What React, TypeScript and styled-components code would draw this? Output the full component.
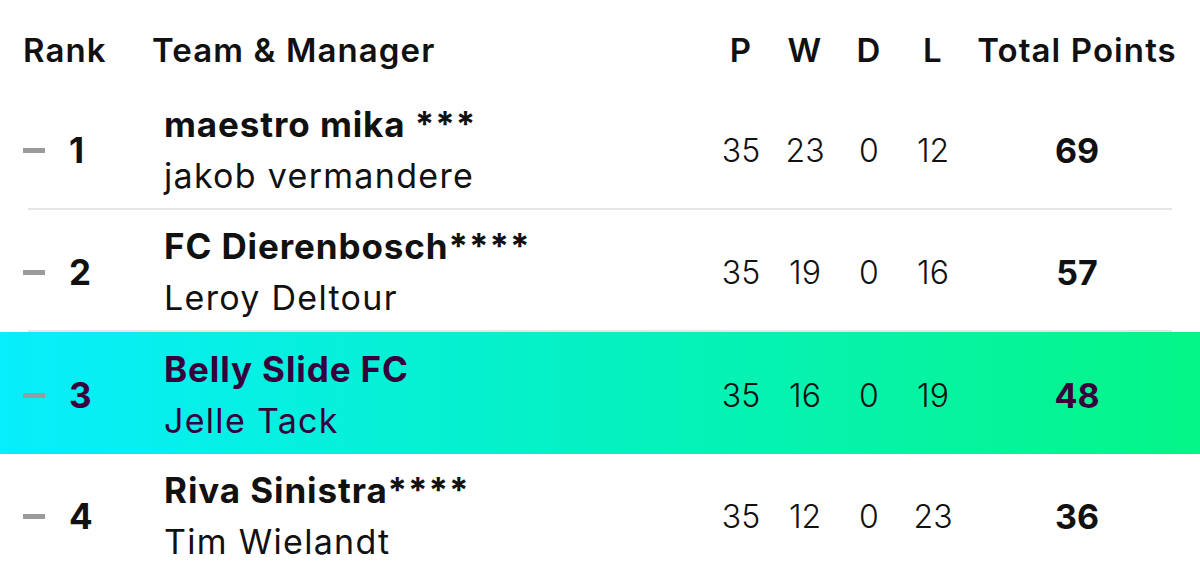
import React from "react";
import styled, { createGlobalStyle } from "styled-components";

const GlobalStyle = createGlobalStyle`
  html, body {
    margin: 0;
    padding: 0;
    background: #ffffff;
  }
  body {
    font-family: Inter, "Noto Sans", "Liberation Sans", sans-serif;
    color: #111111;
    width: 1200px;
    height: 572px;
    overflow: hidden;
  }
`;

const columns = `140px 1fr 64px 64px 64px 64px 224px`;

const Table = styled.div`
  width: 1200px;
  display: flex;
  flex-direction: column;
`;

const HeaderRow = styled.div`
  display: grid;
  grid-template-columns: ${columns};
  align-items: center;
  height: 88px;
  padding: 12px 11px 0 23px;
  box-sizing: border-box;
  font-size: 33px;
  font-weight: 600;
  letter-spacing: 1.1px;
`;

const HeadCell = styled.div<{ $center?: boolean; $shift?: number }>`
  text-align: ${(p) => (p.$center ? "center" : "left")};
  margin-left: ${(p) => p.$shift ?? 0}px;
  white-space: nowrap;
`;

const Row = styled.div<{ $active?: boolean }>`
  display: grid;
  grid-template-columns: ${columns};
  align-items: center;
  height: ${(p) => (p.$active ? 122 : 120)}px;
  padding: 4px 11px 0 23px;
  box-sizing: border-box;
  color: ${(p) => (p.$active ? "#37003c" : "#111111")};
  background: ${(p) =>
    p.$active
      ? "linear-gradient(90deg, #07eefc 0%, #04f587 100%)"
      : "transparent"};
`;

const Divider = styled.div`
  height: 2px;
  margin: 0 28px;
  background: #e6e6e6;
`;

const RankCell = styled.div`
  display: flex;
  align-items: center;
  gap: 24px;
`;

const Dash = styled.span`
  display: block;
  width: 22px;
  height: 5px;
  background: #9b9b9b;
`;

const RankNum = styled.span`
  font-size: 35px;
  font-weight: 700;
`;

const TeamCell = styled.div`
  display: flex;
  flex-direction: column;
  padding-left: 1px;
`;

const TeamName = styled.div`
  font-size: 35px;
  font-weight: 700;
  line-height: 40px;
  letter-spacing: 0.9px;
  white-space: nowrap;
`;

const Manager = styled.div`
  font-size: 34px;
  font-weight: 400;
  line-height: 42px;
  margin-top: 11px;
  letter-spacing: 1.3px;
  white-space: nowrap;
`;

const Stat = styled.div`
  text-align: center;
  font-size: 32px;
  font-weight: 300;
  color: #111111;
`;

const Points = styled.div`
  text-align: center;
  font-size: 34px;
  font-weight: 700;
`;

type Entry = {
  rank: number;
  team: string;
  manager: string;
  p: number;
  w: number;
  d: number;
  l: number;
  pts: number;
  active?: boolean;
};

const entries: Entry[] = [
  { rank: 1, team: "maestro mika ***", manager: "jakob vermandere", p: 35, w: 23, d: 0, l: 12, pts: 69 },
  { rank: 2, team: "FC Dierenbosch****", manager: "Leroy Deltour", p: 35, w: 19, d: 0, l: 16, pts: 57 },
  { rank: 3, team: "Belly Slide FC", manager: "Jelle Tack", p: 35, w: 16, d: 0, l: 19, pts: 48, active: true },
  { rank: 4, team: "Riva Sinistra****", manager: "Tim Wielandt", p: 35, w: 12, d: 0, l: 23, pts: 36 },
];

export default function App() {
  return (
    <>
      <GlobalStyle />
      <Table>
        <HeaderRow>
          <HeadCell>Rank</HeadCell>
          <HeadCell $shift={-11}>Team &amp; Manager</HeadCell>
          <HeadCell $center>P</HeadCell>
          <HeadCell $center>W</HeadCell>
          <HeadCell $center>D</HeadCell>
          <HeadCell $center>L</HeadCell>
          <HeadCell $center>Total Points</HeadCell>
        </HeaderRow>
        {entries.map((e, i) => {
          const next = entries[i + 1];
          // a thin rule sits under each plain row, but not around the highlighted one's bottom
          const showDivider = Boolean(next) && !e.active;
          return (
            <React.Fragment key={e.rank}>
              <Row $active={e.active}>
                <RankCell>
                  <Dash />
                  <RankNum>{e.rank}</RankNum>
                </RankCell>
                <TeamCell>
                  <TeamName>{e.team}</TeamName>
                  <Manager>{e.manager}</Manager>
                </TeamCell>
                <Stat>{e.p}</Stat>
                <Stat>{e.w}</Stat>
                <Stat>{e.d}</Stat>
                <Stat>{e.l}</Stat>
                <Points>{e.pts}</Points>
              </Row>
              {showDivider && <Divider />}
            </React.Fragment>
          );
        })}
      </Table>
    </>
  );
}
